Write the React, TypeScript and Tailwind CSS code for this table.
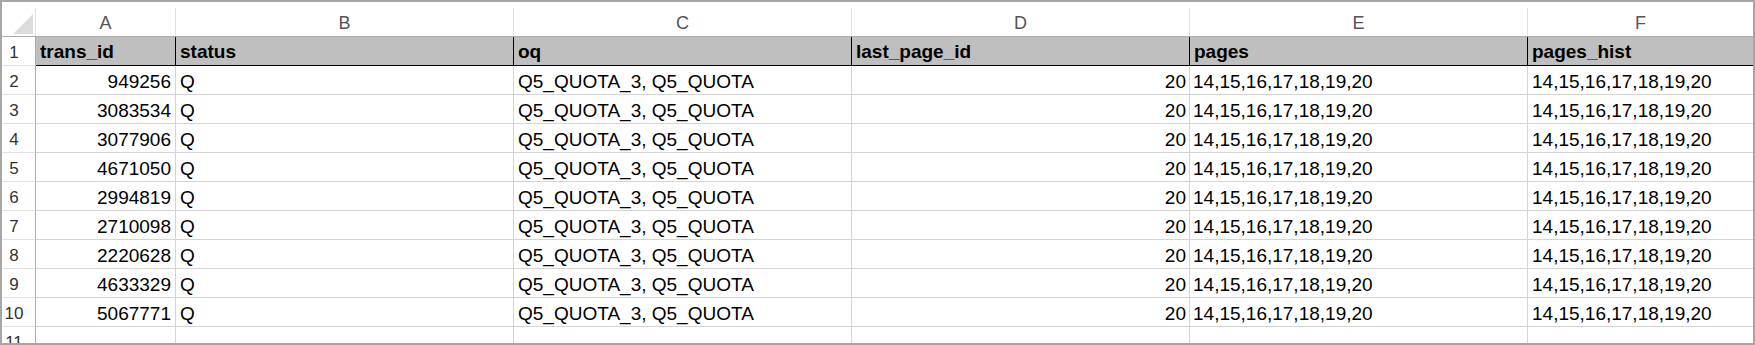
import React from 'react';

const ids = ['949256', '3083534', '3077906', '4671050', '2994819', '2710098', '2220628', '4633329', '5067771'];

const headers = ['trans_id', 'status', 'oq', 'last_page_id', 'pages', 'pages_hist'];
const letters = ['A', 'B', 'C', 'D', 'E', 'F'];
const colW = ['w-[140px]', 'w-[338px]', 'w-[338px]', 'w-[338px]', 'w-[338px]', 'w-[225px]'];

const font = { fontFamily: '"Liberation Sans", Arial, sans-serif' };

const RowNum: React.FC<{ n: number }> = ({ n }) => (
  <div className="w-[34px] shrink-0 h-[29px] border-r border-b border-r-[#ababab] border-b-[#e1e1e1] text-center pr-[9px] pt-[3px] leading-[25px] text-[17px] text-[#333]">
    {n}
  </div>
);

const App: React.FC = () => {
  return (
    <div
      className="w-[1755px] h-[345px] border-2 border-[#a6a6a6] bg-white overflow-hidden text-black"
      style={font}
    >
      {/* column letters */}
      <div className="flex h-[35px] border-b border-[#ababab]">
        <div className="w-[34px] shrink-0 h-[28px] mt-[6px] border-r border-[#e1e1e1] flex justify-end items-end pr-[2px] pb-[2px]">
          <svg width="20" height="20" viewBox="0 0 20 20">
            <polygon points="20,0 20,20 0,20" fill="#dcdcdc" />
          </svg>
        </div>
        {letters.map((l, i) => (
          <div
            key={l}
            className={`${colW[i]} shrink-0 h-[28px] mt-[6px] ${i < 5 ? 'border-r border-[#e1e1e1]' : ''} text-center pt-[3px] leading-[25px] text-[18px] text-[#555]`}
          >
            {l}
          </div>
        ))}
      </div>

      {/* header row */}
      <div className="flex">
        <RowNum n={1} />
        {headers.map((h, i) => (
          <div
            key={h}
            className={`${colW[i]} shrink-0 h-[29px] bg-[#bfbfbf] border-b border-black ${i < 5 ? 'border-r' : ''} px-[4px] pt-[2px] leading-[26px] text-[19px] font-bold whitespace-nowrap overflow-hidden`}
          >
            {h}
          </div>
        ))}
      </div>

      {/* data rows */}
      {ids.map((id, r) => (
        <div key={id} className="flex">
          <RowNum n={r + 2} />
          <div className="w-[140px] shrink-0 h-[29px] border-r border-b border-[#d4d4d4] text-right pr-[4px] pt-[3px] leading-[25px] text-[19px]">
            {id}
          </div>
          <div className="w-[338px] shrink-0 h-[29px] border-r border-b border-[#d4d4d4] pl-[4px] pt-[3px] leading-[25px] text-[19px]">
            Q
          </div>
          <div className="w-[338px] shrink-0 h-[29px] border-r border-b border-[#d4d4d4] pl-[4px] pt-[3px] leading-[25px] text-[19px] whitespace-nowrap">
            Q5_QUOTA_3, Q5_QUOTA
          </div>
          <div className="w-[338px] shrink-0 h-[29px] border-r border-b border-[#d4d4d4] text-right pr-[3px] pt-[3px] leading-[25px] text-[19px]">
            20
          </div>
          <div className="w-[338px] shrink-0 h-[29px] border-r border-b border-[#d4d4d4] pl-[3px] pt-[3px] leading-[25px] text-[19px] whitespace-nowrap">
            14,15,16,17,18,19,20
          </div>
          <div className="w-[225px] shrink-0 h-[29px] border-b border-[#d4d4d4] pl-[4px] pt-[3px] leading-[25px] text-[19px] whitespace-nowrap">
            14,15,16,17,18,19,20
          </div>
        </div>
      ))}

      {/* empty row 11, cut off by the window */}
      <div className="flex">
        <RowNum n={11} />
        <div className="w-[140px] shrink-0 h-[29px] border-r border-[#d4d4d4]" />
        <div className="w-[338px] shrink-0 h-[29px] border-r border-[#d4d4d4]" />
        <div className="w-[338px] shrink-0 h-[29px] border-r border-[#d4d4d4]" />
        <div className="w-[338px] shrink-0 h-[29px] border-r border-[#d4d4d4]" />
        <div className="w-[338px] shrink-0 h-[29px] border-r border-[#d4d4d4]" />
        <div className="w-[225px] shrink-0 h-[29px]" />
      </div>
    </div>
  );
};

export default App;
